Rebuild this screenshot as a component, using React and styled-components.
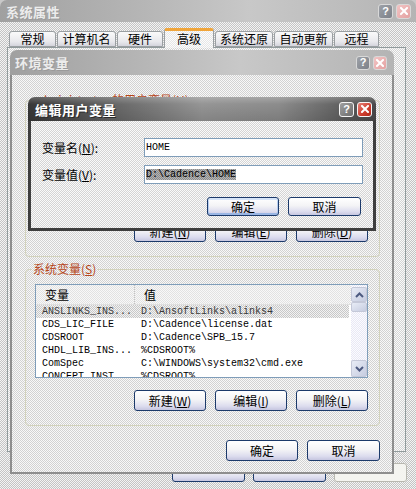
import React from "react"
import styled, { createGlobalStyle } from "styled-components"

// 1px checkerboard, imitates the dithered grey of the screenshot
const checker = (a, b) =>
  `repeating-conic-gradient(${a} 0 25%, ${b} 0 50%) 0 0 / 2px 2px`

const GlobalStyle = createGlobalStyle`
  html, body {
    margin: 0;
    padding: 0;
  }
  body {
    width: 416px;
    height: 489px;
    overflow: hidden;
    font-family: "Noto Sans CJK SC", "Liberation Sans", sans-serif;
    font-size: 12px;
    color: #000;
    background: #c8c8c8;
  }
`

const Desktop = styled.div`
  position: relative;
  width: 416px;
  height: 489px;
  overflow: hidden;
`

const Window = styled.div`
  position: absolute;
  left: ${p => p.$x}px;
  top: ${p => p.$y}px;
  width: ${p => p.$w}px;
  height: ${p => p.$h}px;
  display: flex;
  flex-direction: column;
`

const TitleBar = styled.div`
  flex: none;
  height: ${p => p.$h}px;
  display: flex;
  align-items: center;
  gap: 3px;
  padding: 0 ${p => p.$pr}px 0 ${p => p.$pl}px;
  border-radius: 7px 7px 0 0;
  background: ${p =>
    p.$active
      ? "linear-gradient(to bottom, rgba(255,255,255,0.22), rgba(0,0,0,0) 30%, rgba(0,0,0,0.12)), linear-gradient(to right, #383838, #5e5e5e 20%, #959595 50%, #8c8c8c 72%, #4a4a4a)"
      : "linear-gradient(to right, #a0a0a0, #b6b6b6 35%, #c8c8c8 60%, #b4b4b4)"};
`

const Title = styled.span`
  flex: 1;
  font-size: 13px;
  font-weight: bold;
  letter-spacing: 0.5px;
  color: ${p => (p.$active ? "#ffffff" : "#ececec")};
  text-shadow: ${p => (p.$active ? "1px 1px 0 #2a2a2a" : "1px 1px 0 #9a9a9a")};
`

const CtrlBtn = styled.div`
  flex: none;
  width: ${p => p.$s}px;
  height: ${p => p.$s}px;
  box-sizing: border-box;
  display: grid;
  place-items: center;
  border-radius: 3px;
  border: 1px solid ${p => (p.$active ? "#f4f4f4" : "#d8d8d8")};
  background: ${p =>
    p.$kind === "close"
      ? p.$active
        ? "linear-gradient(135deg, #e8837a, #cc3c2c 60%, #b02818)"
        : "linear-gradient(135deg, #f2c4c4, #e4a2a2)"
      : p.$active
        ? "linear-gradient(135deg, #a0a0a0, #6c6c6c)"
        : "linear-gradient(135deg, #9ea2a8, #7c8088)"};
  color: #fff;
  font-family: "Liberation Sans", sans-serif;
  font-weight: bold;
  font-size: 11px;
  line-height: 1;
`

const Controls = ({ size, active }) => (
  <>
    <CtrlBtn $s={size} $active={active} $kind="help">?</CtrlBtn>
    <CtrlBtn $s={size} $active={active} $kind="close">
      <svg width="8" height="8" viewBox="0 0 8 8">
        <path d="M1 1L7 7M7 1L1 7" stroke="#fff" strokeWidth="2" strokeLinecap="square" />
      </svg>
    </CtrlBtn>
  </>
)

/* ---------- outer window: 系统属性 ---------- */

const OuterBody = styled.div`
  flex: 1;
  display: flex;
  flex-direction: column;
  padding: 7px 0 0 7px;
  background: ${checker("#c4c4c4", "#f4f4f4")};
`

const TabStrip = styled.div`
  display: flex;
  align-items: flex-end;
  gap: 1px;
  height: 18px;
  padding-left: 2px;
  position: relative;
  z-index: 1;
`

const Tab = styled.div`
  box-sizing: border-box;
  width: ${p => p.$w}px;
  height: ${p => (p.$selected ? 20 : 16)}px;
  margin-bottom: ${p => (p.$selected ? -1 : 0)}px;
  border: 1px solid #9a9fa2;
  border-bottom: ${p => (p.$selected ? "none" : "1px solid #9a9fa2")};
  border-top: ${p => (p.$selected ? "3px solid #f0a53a" : "1px solid #9a9fa2")};
  border-radius: 3px 3px 0 0;
  background: ${p =>
    p.$selected
      ? checker("#e6e6e6", "#fcfcfc")
      : "linear-gradient(to bottom, #fafafa, #e8e8ec 70%, #d4d4dc)"};
  text-align: center;
  font-size: 12px;
  line-height: ${p => (p.$selected ? 15 : 14)}px;
`

const TabPanel = styled.div`
  box-sizing: border-box;
  width: 399px;
  height: 405px;
  border: 1px solid #919b9c;
  background: ${checker("#d4d4d4", "#fafafa")};
`

const OuterFooter = styled.div`
  display: flex;
  justify-content: flex-end;
  gap: 8px;
  margin-top: 11px;
  padding-right: 9px;
`

/* ---------- shared widgets ---------- */

const Button = styled.button`
  flex: none;
  box-sizing: border-box;
  width: ${p => p.$w || 72}px;
  height: ${p => p.$h || 21}px;
  padding: 0;
  border: 1px solid ${p => (p.$disabled ? "#b8b8b0" : "#1c3a6a")};
  border-radius: 3px;
  background: ${p =>
    p.$disabled
      ? "#f4f4f0"
      : "linear-gradient(to bottom, #ffffff, #f4f4f6 45%, #dcdcee 80%, #c6c6e0)"};
  box-shadow: ${p =>
    p.$focused ? "inset 0 -2px 0 #9ab6e4, inset 0 2px 0 #d6e4f8, inset 1px 0 0 #b6cdef, inset -1px 0 0 #b6cdef" : "none"};
  font-family: "Noto Sans CJK SC", "Liberation Sans", sans-serif;
  font-size: 12px;
  line-height: 1;
  color: #000;
  u {
    text-underline-offset: 1px;
  }
`

/* ---------- window 2: 环境变量 ---------- */

const EnvBody = styled.div`
  flex: 1;
  display: flex;
  flex-direction: column;
  padding: 18px 12px 0 13px;
  border: 2px solid #8e8e8e;
  border-top: none;
  background: ${checker("#d2d2d2", "#f8f8f8")};
`

const Group = styled.fieldset`
  margin: 0 0 ${p => p.$mb || 0}px;
  padding: 0;
  min-width: 0;
  border: 1px solid #d2d2bc;
  border-radius: 4px;
`

const GroupLabel = styled.legend`
  margin-left: 6px;
  padding: 0 1px;
  font-size: 12px;
  line-height: 14px;
  color: #b6461a;
`

const GroupBody = styled.div`
  display: flex;
  flex-direction: column;
  padding: 8px 11px 14px 9px;
`

const ButtonRow = styled.div`
  display: flex;
  justify-content: flex-end;
  gap: ${p => p.$gap || 9}px;
  margin-top: ${p => p.$mt || 0}px;
  padding-right: ${p => p.$pr || 0}px;
`

const ListBox = styled.div`
  box-sizing: border-box;
  height: 94px;
  display: flex;
  border: 1px solid #7f9db9;
  background: #fff;
  overflow: hidden;
`

const ListMain = styled.div`
  flex: 1;
  display: flex;
  flex-direction: column;
  overflow: hidden;
`

const Cols = styled.div`
  display: grid;
  grid-template-columns: 99px 1fr;
`

const ListHeader = styled(Cols)`
  height: 19px;
  flex: none;
  background: ${checker("#e2e2e2", "#f8f8f8")};
  border-bottom: 1px solid #e0e0e0;
`

const HeadCell = styled.div`
  padding-left: 9px;
  line-height: 19px;
  font-size: 12px;
  border-right: ${p => (p.$sep ? "1px dotted #c4c4c4" : "none")};
`

const Row = styled(Cols)`
  flex: none;
  height: 13px;
  margin-right: 2px;
  background: ${p => (p.$selected ? checker("#c8c8c8", "#f2f2f2") : "transparent")};
  color: ${p => (p.$selected ? "#3a3a3a" : "#000")};
`

const Cell = styled.div`
  padding-left: 6px;
  font-family: "Liberation Mono", monospace;
  font-size: 10px;
  line-height: 13px;
  white-space: pre;
  overflow: hidden;
`

const ScrollBar = styled.div`
  flex: none;
  width: 16px;
  display: flex;
  flex-direction: column;
  padding: 2px 0 0;
  box-sizing: border-box;
  background: ${checker("#e8e8f4", "#fbfbff")};
`

const ScrollBtn = styled.div`
  box-sizing: border-box;
  height: ${p => p.$h || 15}px;
  margin-top: ${p => (p.$push ? "auto" : "0")};
  display: grid;
  place-items: center;
  border: 1px solid #c4c8d8;
  border-radius: 2px;
  background: linear-gradient(to bottom right, #e8ecf6, #c6cce0);
`

const Chevron = ({ up }) => (
  <svg width="9" height="6" viewBox="0 0 9 6">
    <path
      d={up ? "M1 5L4.5 1.5L8 5" : "M1 1L4.5 4.5L8 1"}
      fill="none"
      stroke="#4d5a80"
      strokeWidth="2"
    />
  </svg>
)

const VarList = ({ rows }) => (
  <ListBox>
    <ListMain>
      <ListHeader>
        <HeadCell $sep>变量</HeadCell>
        <HeadCell>值</HeadCell>
      </ListHeader>
      {rows.map(([name, value], i) => (
        <Row key={name} $selected={i === 0}>
          <Cell>{name}</Cell>
          <Cell>{value}</Cell>
        </Row>
      ))}
    </ListMain>
    <ScrollBar>
      <ScrollBtn>
        <Chevron up />
      </ScrollBtn>
      <ScrollBtn $h={10} />
      <ScrollBtn $push $h={17}>
        <Chevron />
      </ScrollBtn>
    </ScrollBar>
  </ListBox>
)

/* ---------- dialog 3: 编辑用户变量 ---------- */

const EditBody = styled.div`
  flex: 1;
  display: flex;
  flex-direction: column;
  gap: 8px;
  padding: 17px 10px 0 11px;
  border: 3px solid #3e3e3e;
  border-top: none;
  background: ${checker("#d4d4d4", "#fafafa")};
`

const FieldRow = styled.div`
  display: flex;
  align-items: center;
  height: 19px;
`

const FieldLabel = styled.div`
  width: 102px;
  flex: none;
  font-size: 12px;
  u {
    text-underline-offset: 1px;
  }
`

const Field = styled.div`
  flex: 1;
  box-sizing: border-box;
  height: 19px;
  padding-left: 1px;
  border: 1px solid #7f9db9;
  background: #fff;
  font-family: "Liberation Mono", monospace;
  font-size: 10px;
  line-height: 17px;
  white-space: pre;
`

const Selected = styled.span`
  background: ${checker("#8a8a8a", "#b4b4b4")};
  color: #000;
`

const userRows = [
  ["HOME", "D:\\Cadence\\HOME"],
  ["TEMP", "C:\\Documents and Settings\\..."],
  ["TMP", "C:\\Documents and Settings\\..."],
]

const systemRows = [
  ["ANSLINKS_INS...", "D:\\AnsoftLinks\\alinks4"],
  ["CDS_LIC_FILE", "D:\\Cadence\\license.dat"],
  ["CDSROOT", "D:\\Cadence\\SPB_15.7"],
  ["CHDL_LIB_INS...", "%CDSROOT%"],
  ["ComSpec", "C:\\WINDOWS\\system32\\cmd.exe"],
  ["CONCEPT_INST...", "%CDSROOT%"],
]

const tabs = [
  ["常规", 47],
  ["计算机名", 59],
  ["硬件", 46],
  ["高级", 50],
  ["系统还原", 58],
  ["自动更新", 59],
  ["远程", 45],
]

const App = () => {
  return (
    <Desktop>
      <GlobalStyle />

      <Window $x={0} $y={0} $w={416} $h={489}>
        <TitleBar $h={22} $pl={6} $pr={5}>
          <Title>系统属性</Title>
          <Controls size={15} />
        </TitleBar>
        <OuterBody>
          <TabStrip>
            {tabs.map(([label, w]) => (
              <Tab key={label} $w={w} $selected={label === "高级"}>
                {label}
              </Tab>
            ))}
          </TabStrip>
          <TabPanel />
          {/* the labels of these buttons sit under the 环境变量 window */}
          <OuterFooter>
            <Button $w={73} $h={19} aria-label="确定" />
            <Button $w={73} $h={19} aria-label="取消" />
            <Button $w={73} $h={19} $disabled aria-label="应用" />
          </OuterFooter>
        </OuterBody>
      </Window>

      <Window $x={10} $y={50} $w={384} $h={424}>
        <TitleBar $h={25} $pl={5} $pr={7}>
          <Title>环境变量</Title>
          <Controls size={14} />
        </TitleBar>
        <EnvBody>
          <Group $mb={5}>
            <GroupLabel>administrator 的用户变量(<u>U</u>)</GroupLabel>
            <GroupBody>
              <VarList rows={userRows} />
              <ButtonRow $mt={12}>
                <Button>新建(<u>N</u>)</Button>
                <Button>编辑(<u>E</u>)</Button>
                <Button>删除(<u>D</u>)</Button>
              </ButtonRow>
            </GroupBody>
          </Group>
          <Group>
            <GroupLabel>系统变量(<u>S</u>)</GroupLabel>
            <GroupBody>
              <VarList rows={systemRows} />
              <ButtonRow $mt={12}>
                <Button>新建(<u>W</u>)</Button>
                <Button>编辑(<u>I</u>)</Button>
                <Button>删除(<u>L</u>)</Button>
              </ButtonRow>
            </GroupBody>
          </Group>
          <ButtonRow $mt={14}>
            <Button>确定</Button>
            <Button $w={73}>取消</Button>
          </ButtonRow>
        </EnvBody>
      </Window>

      <Window $x={28} $y={97} $w={348} $h={134}>
        <TitleBar $h={24} $pl={7} $pr={4} $active>
          <Title $active>编辑用户变量</Title>
          <Controls size={15} active />
        </TitleBar>
        <EditBody>
          <FieldRow>
            <FieldLabel>变量名(<u>N</u>):</FieldLabel>
            <Field>HOME</Field>
          </FieldRow>
          <FieldRow>
            <FieldLabel>变量值(<u>V</u>):</FieldLabel>
            <Field>
              <Selected>D:\Cadence\HOME</Selected>
            </Field>
          </FieldRow>
          <ButtonRow $mt={5} $pr={2}>
            <Button $h={19} $focused>确定</Button>
            <Button $h={19} $w={73}>取消</Button>
          </ButtonRow>
        </EditBody>
      </Window>
    </Desktop>
  )
}

export default App
